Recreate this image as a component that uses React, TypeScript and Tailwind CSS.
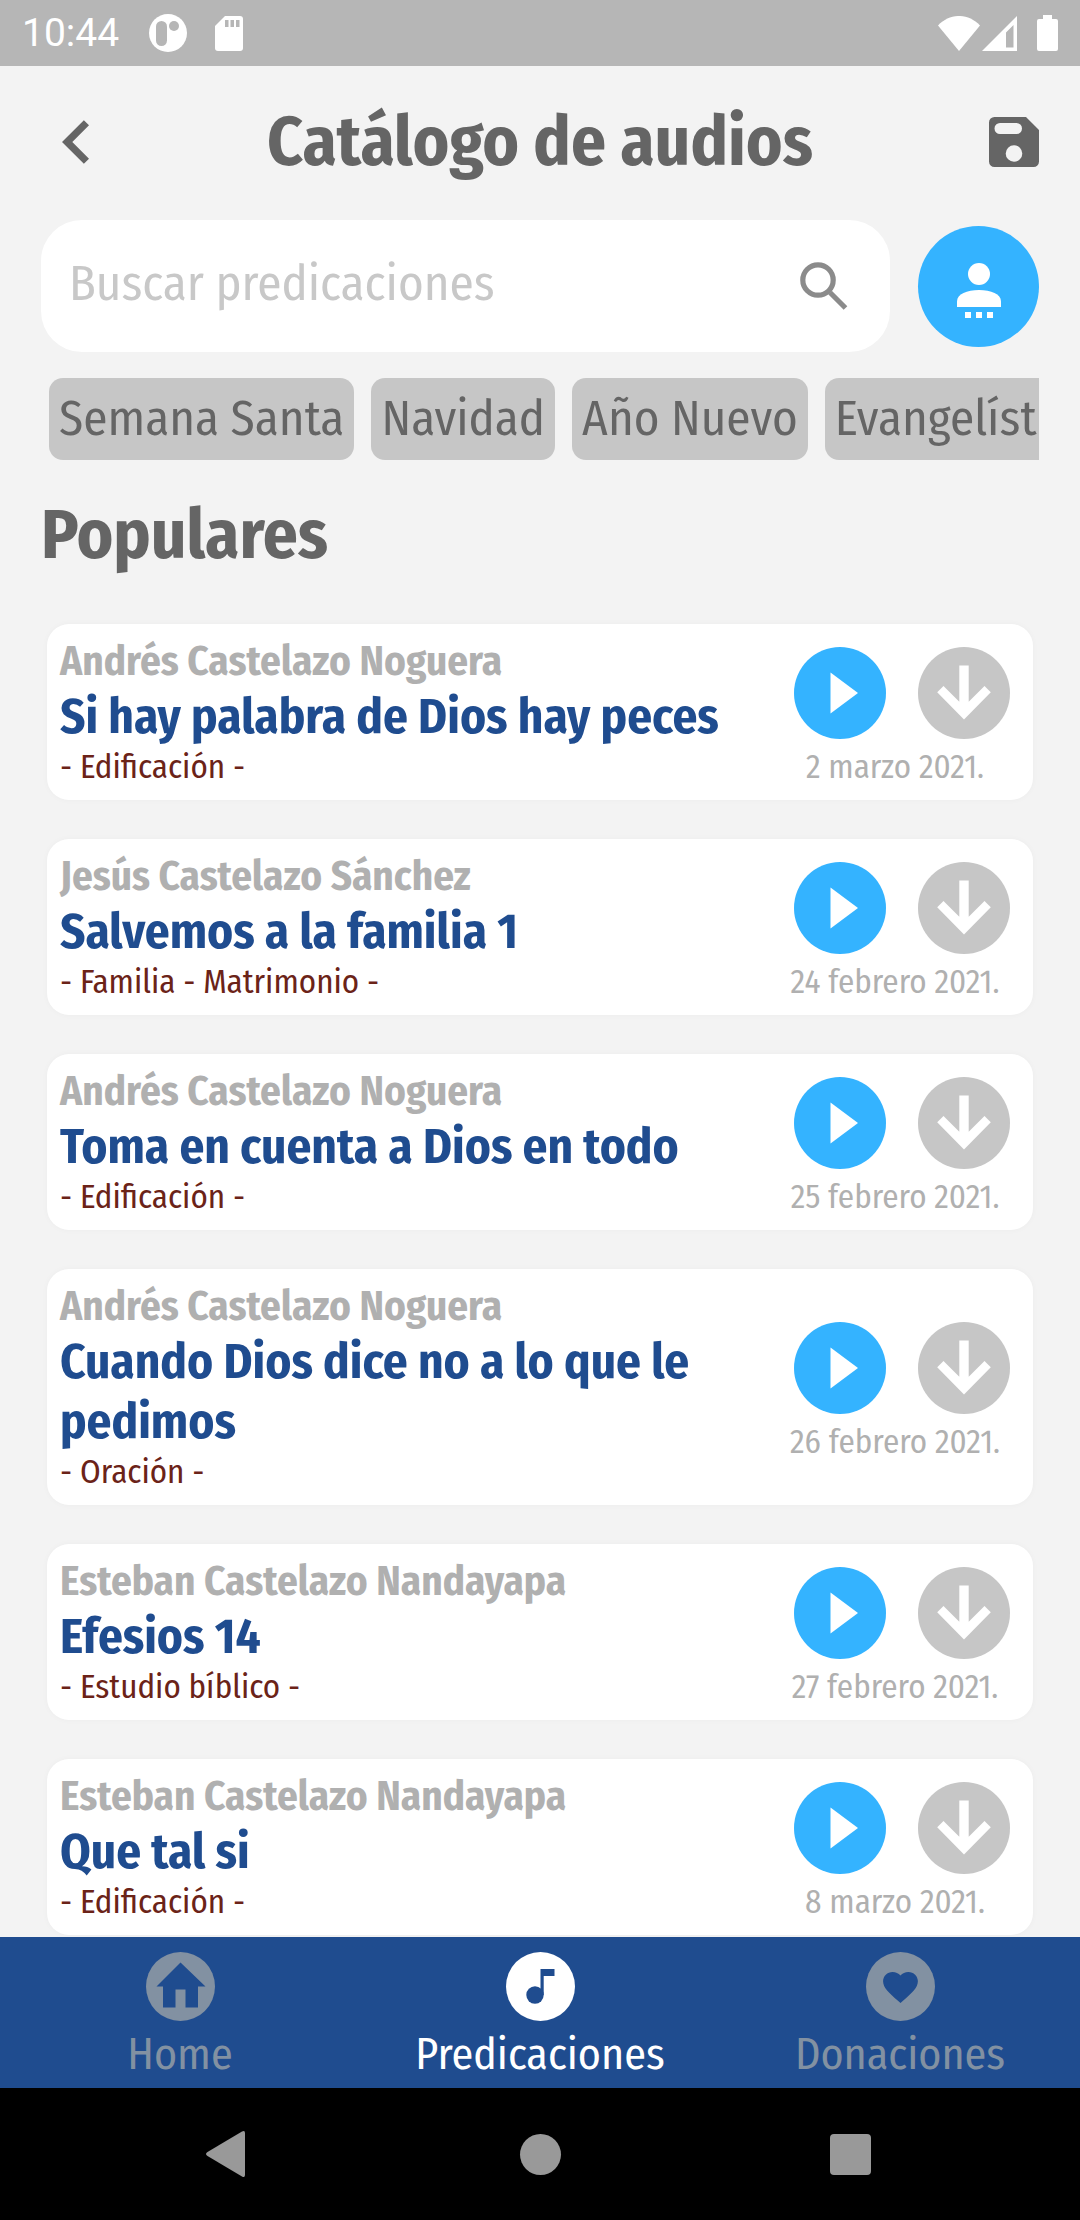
type Sermon = {
  author: string
  title: string
  tags: string
  date: string
}

const categories = ['Semana Santa', 'Navidad', 'Año Nuevo', 'Evangelísticas']

const sermons: Sermon[] = [
  { author: 'Andrés Castelazo Noguera', title: 'Si hay palabra de Dios hay peces', tags: '- Edificación -', date: '2 marzo 2021.' },
  { author: 'Jesús Castelazo Sánchez', title: 'Salvemos a la familia 1', tags: '- Familia - Matrimonio -', date: '24 febrero 2021.' },
  { author: 'Andrés Castelazo Noguera', title: 'Toma en cuenta a Dios en todo', tags: '- Edificación -', date: '25 febrero 2021.' },
  { author: 'Andrés Castelazo Noguera', title: 'Cuando Dios dice no a lo que le pedimos', tags: '- Oración -', date: '26 febrero 2021.' },
  { author: 'Esteban Castelazo Nandayapa', title: 'Efesios 14', tags: '- Estudio bíblico -', date: '27 febrero 2021.' },
  { author: 'Esteban Castelazo Nandayapa', title: 'Que tal si', tags: '- Edificación -', date: '8 marzo 2021.' },
]

function StatusBar() {
  return (
    <div className="h-[66px] bg-[#b6b6b6] text-white flex items-center justify-between px-[22px]">
      <div className="flex items-center">
        <span className="font-[Roboto,sans-serif] text-[39px] leading-[46px]">10:44</span>
        <svg className="ml-[30px]" width="38" height="38" viewBox="0 0 38 38" fill="currentColor">
          <circle cx="19" cy="19" r="19" />
          <rect x="7" y="7" width="11" height="25" rx="5.5" fill="#b6b6b6" />
          <circle cx="25" cy="12" r="5" fill="#b6b6b6" />
        </svg>
        <svg className="ml-7" width="28" height="35" viewBox="0 0 28 35" fill="currentColor">
          <path d="M10 0h15a3 3 0 0 1 3 3v29a3 3 0 0 1-3 3H3a3 3 0 0 1-3-3V10z" />
          <path d="M10 4h3.500v7H10zM15.500 4H19v7h-3.500zM21 4h3.500v7H21z" fill="#b6b6b6" />
        </svg>
      </div>
      <div className="flex items-center">
        <svg width="42" height="35" viewBox="0 0 42 35" fill="currentColor">
          <path d="M0 9.500C12-3.200 30-3.200 42 9.500L21 35z" />
        </svg>
        <svg className="ml-0.5" width="35" height="35" viewBox="0 0 35 35" fill="currentColor">
          <path fillRule="evenodd" d="M35 0v35H0zM31.500 9L24 16.500V31.500h7.500z" />
        </svg>
        <svg className="ml-5" width="21" height="36" viewBox="0 0 21 36" fill="currentColor">
          <path d="M6 0h9v4h4a2 2 0 0 1 2 2v28a2 2 0 0 1-2 2H2a2 2 0 0 1-2-2V6a2 2 0 0 1 2-2h4z" />
        </svg>
      </div>
    </div>
  )
}

function Header() {
  return (
    <header className="flex items-center pt-[34px]">
      <div className="flex-1 flex">
        <button type="button" aria-label="Volver" className="ml-[21px]">
          <svg width="27" height="44" viewBox="8 6 7.410 12" fill="currentColor">
            <path d="M15.410 7.410L14 6l-6 6 6 6 1.410-1.410L10.830 12z" />
          </svg>
        </button>
      </div>
      <h1 className="text-[69px] leading-[84px] font-bold">Catálogo de audios</h1>
      <div className="flex-1 flex justify-end">
        <button type="button" aria-label="Guardados">
          <svg width="50" height="50" viewBox="0 0 50 50" fill="currentColor">
            <path
              fillRule="evenodd"
              d="M5.500 0H37l13 13v31.500a5.500 5.500 0 0 1-5.500 5.500h-39A5.500 5.500 0 0 1 0 44.500v-39A5.500 5.500 0 0 1 5.500 0zM11 6a5.500 5.500 0 0 0 0 11h16.500a5.500 5.500 0 0 0 0-11zM25 28.200a8.300 8.300 0 1 0 0 16.600a8.300 8.300 0 1 0 0-16.600z"
            />
          </svg>
        </button>
      </div>
    </header>
  )
}

function SearchRow() {
  return (
    <div className="flex items-center gap-7 mt-9">
      <div className="flex-1 h-[132px] bg-white rounded-[41px] flex items-center pl-7 pr-[42px]">
        <input
          type="text"
          aria-label="Buscar predicaciones"
          placeholder="Buscar predicaciones"
          className="flex-1 min-w-0 pb-1 text-[49px] leading-[60px] outline-none placeholder:text-[#c8c8c8]"
        />
        <button type="button" aria-label="Buscar">
          <svg width="48" height="48" viewBox="0 0 48 48" fill="none" stroke="#8b8b8b" strokeWidth="5.200">
            <circle cx="18" cy="18" r="15.200" />
            <path d="M30 30.500L45.500 46" />
          </svg>
        </button>
      </div>
      <button type="button" aria-label="Predicadores" className="size-[121px] rounded-full bg-[#34b3ff] flex justify-center items-center">
        <svg width="44" height="66" viewBox="0 0 44 66" fill="#fff">
          <circle cx="22" cy="21" r="11" />
          <path d="M0 54v-5.500C0 41 10 37 22 37s22 4 22 11.500V54z" />
          <path d="M8 59h6v6H8zM19 59h6v6h-6zM30 59h6v6h-6z" />
        </svg>
      </button>
    </div>
  )
}

function SermonCard({ author, title, tags, date }: Sermon) {
  return (
    <li className="bg-white rounded-[22px] shadow-[0_0_6px_rgba(0,0,0,0.03)] flex items-center py-[13px] pl-[13px] pr-[23px]">
      <div className="flex-1">
        <p className="text-[41px] leading-[50px] font-bold text-[#b0b0b0]">{author}</p>
        <h3 className="text-[49px] leading-[60px] font-bold text-[#1f4c8f]">{title}</h3>
        <p className="text-[33px] leading-[40px] text-[#6b2318]">{tags}</p>
      </div>
      <div className="w-[216px] flex flex-col items-center pt-2.5">
        <div className="flex gap-8">
          <button type="button" aria-label={`Reproducir ${title}`}>
            <svg width="92" height="92" viewBox="0 0 92 92">
              <circle cx="46" cy="46" r="46" fill="#34b3ff" />
              <path d="M36.500 25.500L64 46L36.500 66.500z" fill="#fff" />
            </svg>
          </button>
          <button type="button" aria-label={`Descargar ${title}`}>
            <svg width="92" height="92" viewBox="0 0 92 92">
              <circle cx="46" cy="46" r="46" fill="#c6c6c6" />
              <path d="M41.300 18.500h9.400v36.200L66.500 39l6.300 6.300L46 72.500L19.200 45.300l6.300-6.300l15.800 15.700z" fill="#fff" />
            </svg>
          </button>
        </div>
        <time className="mt-2 mr-3.5 text-[33px] leading-[40px] whitespace-nowrap text-[#b0b0b0]">{date}</time>
      </div>
    </li>
  )
}

function BottomTabs() {
  return (
    <nav className="bg-[#1f4c8f] grid grid-cols-3 pt-[15px] pb-[7px] text-[44px] leading-[53px] text-[#8291a2]">
      <a href="#home" className="flex flex-col items-center gap-[7px]">
        <svg width="69" height="69" viewBox="0 0 69 69">
          <circle cx="34.500" cy="34.500" r="34.500" fill="currentColor" />
          <path d="M34.500 10.500L59.500 34.500H52V55.500H39.500V37.500H29.500V55.500H17V34.500H10.500z" fill="#1f4c8f" />
        </svg>
        Home
      </a>
      <a href="#predicaciones" aria-current="page" className="flex flex-col items-center gap-[7px] text-white">
        <svg width="69" height="69" viewBox="0 0 69 69">
          <circle cx="34.500" cy="34.500" r="34.500" fill="currentColor" />
          <circle cx="29" cy="43" r="8.700" fill="#1f4c8f" />
          <path d="M34.500 17h14v7H37.700v19h-3.200z" fill="#1f4c8f" />
        </svg>
        Predicaciones
      </a>
      <a href="#donaciones" className="flex flex-col items-center gap-[7px]">
        <svg width="69" height="69" viewBox="0 0 69 69">
          <circle cx="34.500" cy="34.500" r="34.500" fill="currentColor" />
          <path
            transform="translate(13.600 14.800) scale(1.740 1.700)"
            d="M12 21.350l-1.450-1.320C5.400 15.360 2 12.280 2 8.500 2 5.420 4.420 3 7.500 3c1.740 0 3.410.81 4.500 2.090C13.090 3.810 14.760 3 16.500 3 19.580 3 22 5.420 22 8.500c0 3.780-3.400 6.860-8.550 11.540z"
            fill="#1f4c8f"
          />
        </svg>
        Donaciones
      </a>
    </nav>
  )
}

function SystemNav() {
  return (
    <div className="h-[132px] bg-black text-[#999] grid grid-cols-3 items-center justify-items-center px-[75px]">
      <button type="button" aria-label="Atrás">
        <svg width="48" height="46" viewBox="0 0 48 46" fill="currentColor">
          <path d="M36 .500Q39-1 39 2v42q0 3-3 1.500L1.500 25q-3-2 0-4z" />
        </svg>
      </button>
      <button type="button" aria-label="Inicio" className="size-[41px] rounded-full bg-current" />
      <button type="button" aria-label="Recientes" className="size-[41px] rounded bg-current" />
    </div>
  )
}

export default function App() {
  return (
    <div className="min-h-screen flex flex-col bg-[#f3f3f3] text-[#656565] font-['Fira_Sans_Condensed','Roboto_Condensed',sans-serif]">
      <StatusBar />
      <main className="flex-1 px-[41px]">
        <Header />
        <SearchRow />
        <div className="mt-[26px] pl-2 flex gap-[17px] overflow-hidden">
          {categories.map((name) => (
            <button key={name} type="button" className="shrink-0 px-2.5 py-[11px] rounded-[14px] bg-[#c6c6c6] text-[49px] leading-[60px]">
              {name}
            </button>
          ))}
        </div>
        <h2 className="mt-[33px] text-[69px] leading-[84px] font-bold">Populares</h2>
        <ul className="mt-[47px] mx-1.5 flex flex-col gap-[39px]">
          {sermons.map((sermon) => (
            <SermonCard key={sermon.title} {...sermon} />
          ))}
        </ul>
      </main>
      <BottomTabs />
      <SystemNav />
    </div>
  )
}
